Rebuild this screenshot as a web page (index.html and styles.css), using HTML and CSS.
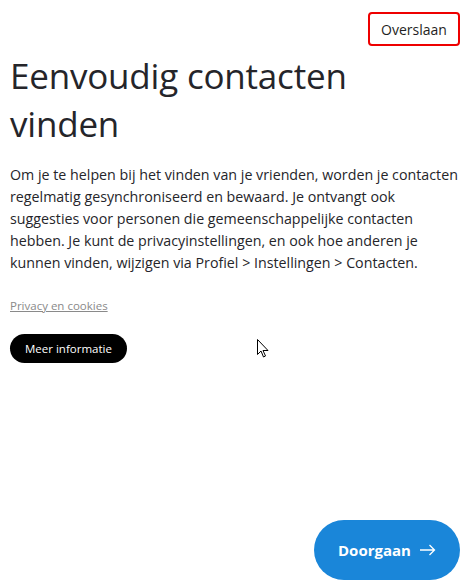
FILE: index.html
```html
<!DOCTYPE html>
<html lang="nl">
<head>
    <meta charset="UTF-8">
    <meta name="viewport" content="width=device-width, initial-scale=1.0">
    <title>Eenvoudig contacten vinden</title>
    <link rel="stylesheet" href="styles.css">
</head>
<body>

<div class="page">
    <div class="topbar">
        <button class="skip">Overslaan</button>
    </div>

    <h1>Eenvoudig contacten vinden</h1>

    <p class="intro">Om je te helpen bij het vinden van je vrienden, worden je contacten<br>
        regelmatig gesynchroniseerd en bewaard. Je ontvangt ook<br>
        suggesties voor personen die gemeenschappelijke contacten<br>
        hebben. Je kunt de privacyinstellingen, en ook hoe anderen je<br>
        kunnen vinden, wijzigen via Profiel &gt; Instellingen &gt; Contacten.</p>

    <a class="privacy" href="#">Privacy en cookies</a>

    <div class="more-row">
        <button class="more">Meer informatie</button>
    </div>

    <div class="footer">
        <button class="continue">Doorgaan
            <svg width="16" height="12" viewBox="0 0 16 12">
                <path d="M0 6 H14.5 M9.5 1 L14.5 6 L9.5 11" fill="none" stroke="#fff" stroke-width="1.3"/>
            </svg>
        </button>
    </div>

    <!-- mouse pointer from the capture -->
    <svg class="cursor" width="12" height="19" viewBox="0 0 12 19">
        <path d="M0.5 0.5 L0.5 15.5 L4 12 L6.5 18 L8.5 17 L6 11.5 L11 11.5 Z" fill="#fff" stroke="#000" stroke-width="1"/>
    </svg>
</div>

</body>
</html>
```

FILE: styles.css
```css
body {
    margin: 0;
    background-color: #ffffff;
    font-family: "Open Sans", "Noto Sans", sans-serif;
    color: #1f1f23;
}
.page {
    position: relative;
    height: 588px;
    display: flex;
    flex-direction: column;
    padding: 0 8px 0 10px;
    box-sizing: border-box;
}
.topbar {
    display: flex;
    justify-content: flex-end;
    padding-top: 12px;
}
.skip {
    font-family: inherit;
    font-size: 14px;
    color: #1f1f23;
    background: none;
    border: 2px solid #ee0000;
    border-radius: 4px;
    width: 92px;
    height: 34px;
    padding: 0;
    cursor: pointer;
}
h1 {
    font-weight: 400;
    font-size: 35px;
    line-height: 48px;
    margin: 6px 0 0 0;
    max-width: 360px;
    color: #25252a;
    letter-spacing: -0.2px;
}
.intro {
    font-size: 14.25px;
    line-height: 22px;
    margin: 16px 0 0 0;
    white-space: nowrap;
    color: #25252a;
}
.privacy {
    margin-top: 24px;
    font-size: 11.5px;
    color: #8a8a8a;
    align-self: flex-start;
}
.more-row {
    display: flex;
    margin-top: 21px;
}
.more {
    font-family: inherit;
    font-size: 11.5px;
    color: #ffffff;
    background-color: #000000;
    border: none;
    border-radius: 15px;
    height: 29px;
    padding: 0 15px;
    cursor: pointer;
}
.cursor {
    position: absolute;
    left: 257px;
    top: 339px;
}
.footer {
    margin-top: auto;
    display: flex;
    justify-content: flex-end;
    padding-bottom: 8px;
}
.continue {
    font-family: inherit;
    font-size: 15px;
    font-weight: 700;
    color: #ffffff;
    background-color: #1a86d9;
    border: none;
    border-radius: 30px;
    width: 146px;
    height: 60px;
    display: flex;
    align-items: center;
    justify-content: center;
    gap: 9px;
    cursor: pointer;
}
```
